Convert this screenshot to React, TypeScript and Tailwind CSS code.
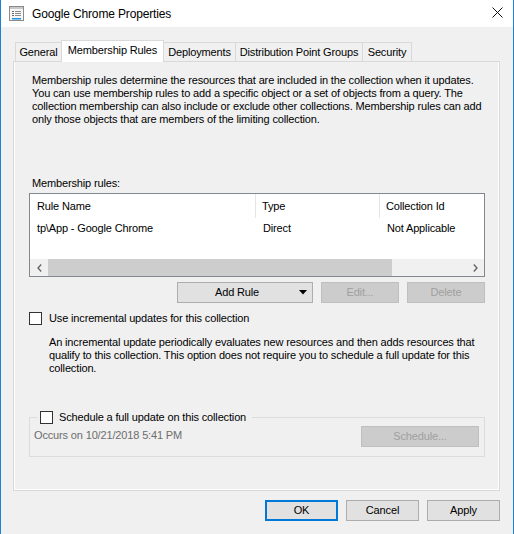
import React from "react";

type Tab = { label: string; width: string; active?: boolean };

const tabs: Tab[] = [
  { label: "General", width: "w-[47px]" },
  { label: "Membership Rules", width: "w-[103px]", active: true },
  { label: "Deployments", width: "w-[73px]" },
  { label: "Distribution Point Groups", width: "w-[128px]" },
  { label: "Security", width: "w-[50px]" },
];

function TitleIcon() {
  return (
    <svg width="15" height="15" viewBox="0 0 15 15">
      <rect x="0.5" y="0.5" width="14" height="14" fill="#f7f7f7" stroke="#8a8a8a" />
      <rect x="1" y="1" width="13" height="2" fill="#c8c8c8" />
      <rect x="3" y="5" width="2" height="1" fill="#6a6a6a" />
      <rect x="6" y="5" width="6" height="1" fill="#8a8a8a" />
      <rect x="3" y="7" width="2" height="1" fill="#6a6a6a" />
      <rect x="6" y="7" width="6" height="1" fill="#8a8a8a" />
      <rect x="3" y="9" width="2" height="1" fill="#6a6a6a" />
      <rect x="6" y="9" width="6" height="1" fill="#8a8a8a" />
      <rect x="3" y="12" width="9" height="1.5" fill="#1e90e0" />
    </svg>
  );
}

function CloseIcon() {
  return (
    <svg width="11" height="11" viewBox="0 0 11 11">
      <path d="M0.5 0.5L10.5 10.5M10.5 0.5L0.5 10.5" stroke="#111" strokeWidth="1" />
    </svg>
  );
}

function Chevron({ dir }: { dir: "left" | "right" }) {
  return (
    <svg width="5" height="8" viewBox="0 0 5 8">
      <path
        d={dir === "left" ? "M4.2 0.5L1 4L4.2 7.5" : "M0.8 0.5L4 4L0.8 7.5"}
        stroke="#606060"
        strokeWidth="1.3"
        fill="none"
      />
    </svg>
  );
}

function CheckBox() {
  return <span className="block h-[13px] w-[13px] shrink-0 border border-[#333333] bg-white" />;
}

function WinButton({
  children,
  className = "justify-center",
  disabled,
  primary,
}: {
  children: React.ReactNode;
  className?: string;
  disabled?: boolean;
  primary?: boolean;
}) {
  const tone = disabled
    ? "bg-[#cccccc] border border-[#bfbfbf] text-[#a0a0a0]"
    : primary
      ? "bg-[#e1e1e1] border-2 border-[#0078d7] text-black"
      : "bg-[#e1e1e1] border border-[#adadad] text-black";
  return <div className={`flex h-[21px] items-center ${tone} ${className}`}>{children}</div>;
}

export default function App() {
  return (
    <div className="flex h-[534px] w-[514px] flex-col overflow-hidden border-x border-[#1883d7] bg-[#f0f0f0] font-['Liberation_Sans',Arial,sans-serif] text-[11px] leading-[13px] tracking-[-0.15px] text-black">
      {/* title bar */}
      <div className="flex h-[27px] shrink-0 items-center bg-white pl-[8px] pr-[10px]">
        <TitleIcon />
        <span className="ml-[8px] text-[12px] leading-[14px]">Google Chrome Properties</span>
        <span className="ml-auto mb-[2px]">
          <CloseIcon />
        </span>
      </div>

      <div className="flex flex-col pl-[12px] pr-[13px] pt-[13px]">
        {/* tab strip */}
        <div className="flex h-[21px] items-end pl-[2px]">
          {tabs.map((t, i) =>
            t.active ? (
              <div
                key={t.label}
                className={`relative z-10 -mb-px flex h-[22px] justify-center border border-b-0 border-[#d9d9d9] bg-white pt-[3px] ${t.width} ${i > 0 ? "-ml-px" : ""}`}
              >
                {t.label}
              </div>
            ) : (
              <div
                key={t.label}
                className={`flex h-[19px] items-center justify-center border border-b-0 border-[#d9d9d9] bg-[#f0f0f0] ${t.width} ${i > 0 ? "-ml-px" : ""}`}
              >
                {t.label}
              </div>
            ),
          )}
        </div>

        {/* tab page */}
        <div className="flex h-[430px] flex-col border border-[#d9d9d9] pl-[15px] pr-[14px] pt-[12px] shadow-[inset_1px_-1px_0_#ffffff,inset_-1px_0_0_#ffffff]">
          <div className="ml-[3px]">
            <div>Membership rules determine the resources that are included in the collection when it updates.</div>
            <div>You can use membership rules to add a specific object or a set of objects from a query. The</div>
            <div>collection membership can also include or exclude other collections. Membership rules can add</div>
            <div>only those objects that are members of the limiting collection.</div>
          </div>

          <div className="ml-[3px] mt-[51px]">Membership rules:</div>

          {/* list view */}
          <div className="mt-[3px] flex h-[84px] flex-col border border-[#828790] bg-white">
            <div className="flex h-[24px] shrink-0 items-center">
              <div className="flex h-full w-[226px] items-center border-r border-[#e5e5e5] pl-[7px]">Rule Name</div>
              <div className="flex h-full w-[124px] items-center border-r border-[#e5e5e5] pl-[6px]">Type</div>
              <div className="flex h-full flex-1 items-center pl-[6px]">Collection Id</div>
            </div>
            <div className="flex h-[20px] shrink-0 items-center">
              <div className="w-[226px] pl-[7px]">tp\App - Google Chrome</div>
              <div className="w-[124px] pl-[7px]">Direct</div>
              <div className="flex-1 pl-[7px]">Not Applicable</div>
            </div>
            <div className="flex-1" />
            <div className="flex h-[17px] shrink-0 items-center bg-[#f0f0f0]">
              <div className="flex w-[18px] justify-center">
                <Chevron dir="left" />
              </div>
              <div className="flex h-full flex-1">
                <div className="h-full w-[344px] bg-[#cdcdcd]" />
              </div>
              <div className="flex w-[18px] justify-center">
                <Chevron dir="right" />
              </div>
            </div>
          </div>

          {/* list buttons */}
          <div className="mt-[5px] flex justify-end gap-[8px]">
            <WinButton className="w-[136px] pl-[37px] pr-[5px]">
              <span>Add Rule</span>
              <svg className="ml-auto" width="8" height="5" viewBox="0 0 8 5">
                <path d="M0 0H8L4 4.5Z" fill="#000" />
              </svg>
            </WinButton>
            <WinButton disabled className="w-[78px] justify-center">
              Edit...
            </WinButton>
            <WinButton disabled className="w-[78px] justify-center">
              Delete
            </WinButton>
          </div>

          {/* incremental updates */}
          <div className="mt-[9px] flex h-[13px] items-center gap-[7px]">
            <CheckBox />
            <span>Use incremental updates for this collection</span>
          </div>
          <div className="ml-[20px] mt-[11px]">
            <div>An incremental update periodically evaluates new resources and then adds resources that</div>
            <div>qualify to this collection. This option does not require you to schedule a full update for this</div>
            <div>collection.</div>
          </div>

          {/* full update group */}
          <fieldset className="mt-[36px] border border-[#dcdcdc] pb-[9px] pl-[4px] pr-[5px] pt-[2px]">
            <legend className="ml-[3px] flex h-[13px] items-center gap-[6px] pl-[3px] pr-[6px]">
              <CheckBox />
              <span>Schedule a full update on this collection</span>
            </legend>
            <div className="flex items-start justify-between">
              <span className="pt-[3px] text-[#6d6d6d]">Occurs on 10/21/2018 5:41 PM</span>
              <WinButton disabled className="w-[118px] justify-center">
                Schedule...
              </WinButton>
            </div>
          </fieldset>
        </div>

        {/* dialog buttons */}
        <div className="mt-[9px] flex justify-end gap-[8px]">
          <WinButton primary className="w-[73px] justify-center">
            OK
          </WinButton>
          <WinButton className="w-[73px] justify-center">Cancel</WinButton>
          <WinButton className="w-[73px] justify-center">Apply</WinButton>
        </div>
      </div>
    </div>
  );
}
